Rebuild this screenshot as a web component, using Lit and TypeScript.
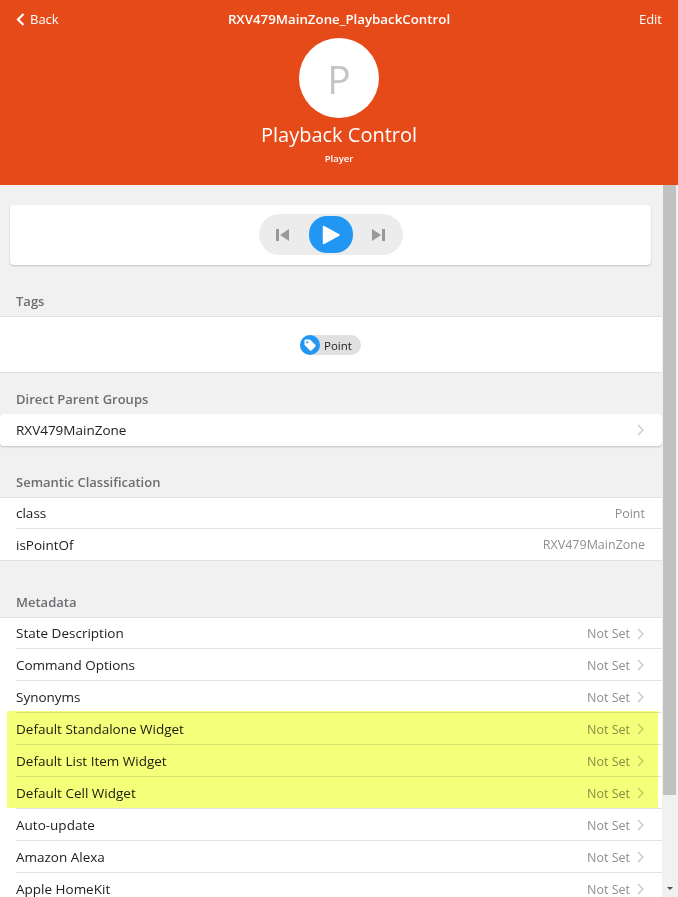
import { LitElement, html, css, svg } from "lit";
import { customElement } from "lit/decorators.js";

const chevron = svg`<svg class="chev" width="7" height="12" viewBox="0 0 7 12"><path d="M1 1l5 5-5 5" fill="none" stroke="#c7c7cc" stroke-width="1.3"/></svg>`;

const meta = ["State Description", "Command Options", "Synonyms"];
const hi = ["Default Standalone Widget", "Default List Item Widget", "Default Cell Widget"];
const rest = ["Auto-update", "Amazon Alexa", "Apple HomeKit"];

@customElement("app-root")
export class AppRoot extends LitElement {
  static styles = css`
    :host {
      display: block;
      width: 678px;
      height: 897px;
      overflow: hidden;
      background: #f1f1f1;
      font-family: "Open Sans", "Noto Sans", sans-serif;
      font-size: 13.5px;
      color: #212121;
    }
    .hero {
      background: #e64a19;
      height: 185px;
      color: #fff;
      display: flex;
      flex-direction: column;
      align-items: center;
    }
    .nav {
      width: 100%;
      box-sizing: border-box;
      height: 38px;
      padding: 0 16px;
      display: flex;
      align-items: center;
      font-size: 13px;
    }
    .nav b { font-weight: 600; font-size: 13.3px; }
    .back { flex: 1; display: flex; align-items: center; gap: 5px; }
    .edit { flex: 1; text-align: right; }
    .avatar {
      width: 80px;
      height: 80px;
      border-radius: 50%;
      background: #fff;
      color: #c4c4c4;
      font-size: 39px;
      display: flex;
      align-items: center;
      justify-content: center;
    }
    .name { font-size: 20px; line-height: 28px; margin-top: 3px; }
    .sub { font-size: 9.5px; font-weight: 600; line-height: 13px; margin-top: 3px; }
    .body { display: grid; grid-template-columns: 662px 16px; grid-template-rows: 712px; }
    .main { min-width: 0; overflow: hidden; }
    .scroll { background: #f1f1f1; display: flex; flex-direction: column; align-items: flex-start; }
    .thumb { width: 13px; height: 610px; margin-left: 1px; background: #c1c1c1; }
    .arrow { margin: auto 0 7px 5px; width: 0; height: 0; border: 3.500px solid transparent; border-top: 3.500px solid #505050; border-bottom: 0; }
    .card {
      margin: 20px 11px 0 10px;
      height: 60px;
      box-sizing: border-box;
      padding-top: 9px;
      background: #fff;
      border-radius: 4px;
      box-shadow: 0 1px 2px rgba(0, 0, 0, 0.2);
      display: flex;
      align-items: flex-start;
      justify-content: center;
    }
    .pill {
      width: 144px;
      height: 41px;
      border-radius: 21px;
      background: #ececec;
      display: flex;
      align-items: center;
      justify-content: space-between;
      padding: 0 18px 0 17px;
      box-sizing: border-box;
    }
    .play {
      width: 44px;
      height: 37px;
      margin-left: 1px;
      border-radius: 18px;
      background: #2196f3;
      display: flex;
      align-items: center;
      justify-content: center;
    }
    .title { padding: 0 16px; font-size: 13px; font-weight: 600; color: #6d6d72; line-height: 18px; }
    .list { background: #fff; border-top: 1px solid #e1e1e1; border-bottom: 1px solid #e1e1e1; }
    .tags { height: 55px; display: flex; align-items: center; justify-content: center; }
    .chip {
      height: 20px;
      border-radius: 10px;
      background: #e0e0e0;
      display: flex;
      align-items: center;
      font-size: 11.5px;
      width: 61px;
      margin-left: -1px;
      gap: 4px;
    }
    .chip i { width: 20px; height: 20px; border-radius: 50%; background: #2196f3; display: flex; align-items: center; justify-content: center; }
    .chip span { padding-top: 1px; }
    .group {
      height: 32px;
      box-sizing: border-box;
      padding: 0 18px 1px 16px;
      background: #fff;
      border-radius: 4px;
      box-shadow: 0 1px 2px rgba(0, 0, 0, 0.2);
      display: flex;
      align-items: center;
      justify-content: space-between;
    }
    .row {
      height: 31px;
      display: flex;
      align-items: center;
      justify-content: space-between;
      margin-left: 16px;
      padding-right: 18px;
      border-bottom: 1px solid #e1e1e1;
    }
    .row.first { height: 30px; }
    .row.plain { padding-right: 17px; }
    .row.last { border-bottom: 0; margin-left: 0; padding-left: 16px; }
    .val { color: #8e8e93; font-size: 12.5px; display: flex; align-items: center; gap: 7px; }
    .val.set { padding-top: 1px; }
    .hl { position: relative; }
    .hl::after {
      content: "";
      position: absolute;
      left: 7px;
      right: 4px;
      top: -2px;
      bottom: 1px;
      background: #f5ff7a;
      mix-blend-mode: multiply;
    }
  `;

  private row(t: string, first = false) {
    return html`<div class="row ${first ? "first" : ""}"><span>${t}</span><span class="val set">Not Set ${chevron}</span></div>`;
  }

  render() {
    return html`
      <div class="hero">
        <div class="nav">
          <span class="back"><svg width="9" height="13" viewBox="0 0 9 13"><path d="M7.500 1L2 6.500 7.500 12" fill="none" stroke="#fff" stroke-width="2.200"/></svg>Back</span>
          <b>RXV479MainZone_PlaybackControl</b>
          <span class="edit">Edit</span>
        </div>
        <div class="avatar">P</div>
        <div class="name">Playback Control</div>
        <div class="sub">Player</div>
      </div>
      <div class="body">
        <div class="main">
          <div class="card">
            <div class="pill">
              <svg width="13" height="12" viewBox="0 0 13 12"><path d="M0 0h3v12H0zM13 0v12L4 6z" fill="#999"/></svg>
              <span class="play"><svg width="18" height="20" viewBox="0 0 18 20"><path d="M1.500 1.500L17 10 1.500 18.500z" fill="#fff" stroke="#fff" stroke-width="1.500" stroke-linejoin="round"/></svg></span>
              <svg width="13" height="12" viewBox="0 0 13 12"><path d="M10 0h3v12h-3zM0 0v12l9-6z" fill="#999"/></svg>
            </div>
          </div>
          <div class="title" style="margin-top:27px">Tags</div>
          <div class="list tags" style="margin-top:6px">
            <span class="chip"><i><svg width="14" height="14" viewBox="0 0 14 14"><path fill-rule="evenodd" d="M1.500 2.500a1 1 0 0 1 1-1H7l5.500 5.500a1 1 0 0 1 0 1.400l-4.100 4.100a1 1 0 0 1-1.400 0L1.500 7zM4.300 3.200a1.100 1.100 0 1 0 0 2.200 1.100 1.100 0 0 0 0-2.200z" fill="#fff"/></svg></i><span>Point</span></span>
          </div>
          <div class="title" style="margin-top:17px">Direct Parent Groups</div>
          <div class="group" style="margin-top:6px"><span>RXV479MainZone</span>${chevron}</div>
          <div class="title" style="margin-top:27px">Semantic Classification</div>
          <div class="list" style="margin-top:6px">
            <div class="row plain first"><span>class</span><span class="val">Point</span></div>
            <div class="row plain last"><span>isPointOf</span><span class="val">RXV479MainZone</span></div>
          </div>
          <div class="title" style="margin-top:32px">Metadata</div>
          <div class="list" style="margin-top:6px;border-bottom:0">
            ${meta.map((t, i) => this.row(t, i === 0))}
            <div class="hl">${hi.map((t) => this.row(t))}</div>
            ${rest.map((t) => this.row(t))}
          </div>
        </div>
        <div class="scroll"><div class="thumb"></div><div class="arrow"></div></div>
      </div>
    `;
  }
}
